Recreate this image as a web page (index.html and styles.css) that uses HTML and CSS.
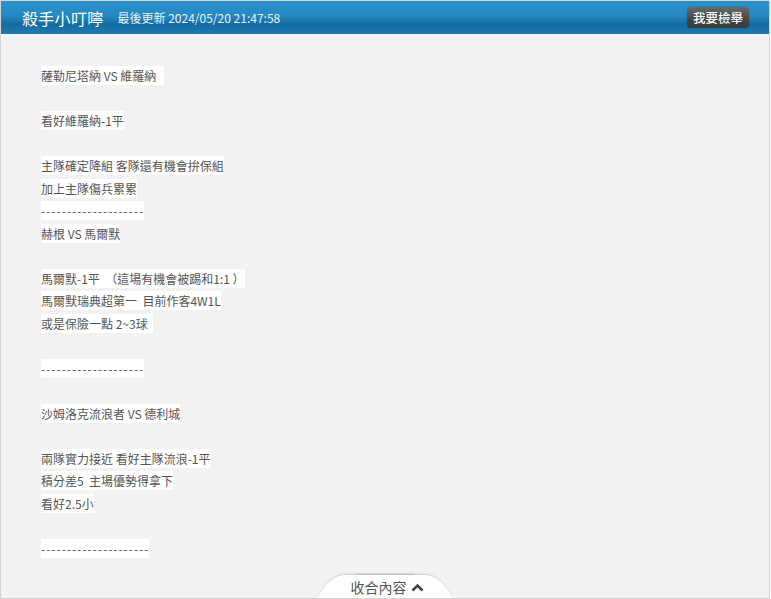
FILE: index.html
```html
<!DOCTYPE html>
<html lang="zh-Hant">
    <head>
        <meta charset="utf-8">
        <meta name="viewport" content="width=device-width, initial-scale=1.0">
        <title>殺手小叮嚀</title>
        <link rel="stylesheet" href="styles.css">
    </head>
    <body>
        <div class="box">
            <div class="box_head">
                <span class="title">殺手小叮嚀</span>
                <span class="update">最後更新 2024/05/20 21:47:58</span>
                <a class="report" href="#">我要檢舉</a>
            </div>
            <div class="box_body">
                <div class="line"><span>薩勒尼塔納 VS 維羅納&nbsp;&nbsp;&nbsp;</span></div>
                <div class="line"></div>
                <div class="line"><span>看好維羅納-1平</span></div>
                <div class="line"></div>
                <div class="line"><span>主隊確定降組 客隊還有機會拚保組</span></div>
                <div class="line"><span>加上主隊傷兵累累</span></div>
                <div class="line"><span class="dash">--------------------</span></div>
                <div class="line"><span>赫根 VS 馬爾默</span></div>
                <div class="line"></div>
                <div class="line"><span>馬爾默-1平&nbsp;&nbsp;（這場有機會被踢和1:1 ）</span></div>
                <div class="line"><span>馬爾默瑞典超第一&nbsp;&nbsp;目前作客4W1L</span></div>
                <div class="line"><span>或是保險一點 2~3球&nbsp;&nbsp;</span></div>
                <div class="line"></div>
                <div class="line"><span class="dash">--------------------</span></div>
                <div class="line"></div>
                <div class="line"><span>沙姆洛克流浪者 VS 德利城</span></div>
                <div class="line"></div>
                <div class="line"><span>兩隊實力接近 看好主隊流浪-1平</span></div>
                <div class="line"><span>積分差5&nbsp;&nbsp;主場優勢得拿下</span></div>
                <div class="line"><span>看好2.5小</span></div>
                <div class="line"></div>
                <div class="line"><span class="dash">---------------------</span></div>
            </div>
            <div class="fold">
                <a class="fold_tab" href="#">收合內容
                    <svg width="13" height="9" viewBox="0 0 13 9"><path d="M1.5 7.5 L6.5 2.5 L11.5 7.5" fill="none" stroke="#444" stroke-width="2.6"/></svg>
                </a>
            </div>
        </div>
    </body>
</html>
```

FILE: styles.css
```css
* {
    box-sizing: border-box;
}

body {
    margin: 0;
    background: #fff;
    font-family: "Noto Sans CJK TC", "Noto Sans", sans-serif;
}

.box {
    width: 770px;
    height: 599px;
    border: 1px solid #d4d4d4;
    background: #f2f2f2;
    display: flex;
    flex-direction: column;
    overflow: hidden;
}

.box_head {
    height: 33px;
    flex: none;
    display: flex;
    align-items: center;
    padding: 0 20px 0 21px;
    background: linear-gradient(#2b92cc 0%, #2489c2 45%, #146c9f 70%, #1b7bb2 100%);
    color: #fff;
}

.title {
    font-size: 16px;
    margin-right: 14px;
    letter-spacing: 0.3px;
}

.update {
    font-size: 12px;
    color: #e8f2f9;
}

.report {
    margin-left: auto;
    height: 21px;
    padding: 0 6px;
    line-height: 21px;
    font-size: 12.5px;
    font-weight: 500;
    color: #fff;
    text-decoration: none;
    border-radius: 4px;
    background: linear-gradient(#6a6a6a, #444 60%, #3a3a3a);
    box-shadow: 0 0 1px rgba(0, 0, 0, 0.5);
}

.box_body {
    flex: 1;
    padding: 31px 0 0 40px;
    font-size: 12px;
    color: #555;
}

.line {
    height: 22.5px;
    line-height: 22.5px;
}

.line span {
    background: #fff;
    padding: 1px 0;
}

.line .dash {
    letter-spacing: 1px;
}

.fold {
    flex: none;
    height: 23px;
    display: flex;
    justify-content: center;
}

.fold_tab {
    position: relative;
    display: flex;
    align-items: center;
    gap: 4px;
    padding: 1px 30px 0 34px;
    height: 23px;
    font-size: 14px;
    color: #555;
    text-decoration: none;
    z-index: 1;
}

.fold_tab::before,
.fold_tab::after {
    content: "";
    position: absolute;
    top: 0;
    bottom: 0;
    width: 60%;
    background: #fff;
    box-shadow: 0 -1px 2px rgba(0, 0, 0, 0.16);
    transform-origin: bottom;
    z-index: -1;
}

.fold_tab::before {
    left: 0;
    transform: skewX(-34deg);
    border-top-left-radius: 12px;
}

.fold_tab::after {
    right: 0;
    transform: skewX(34deg);
    border-top-right-radius: 12px;
}
```
